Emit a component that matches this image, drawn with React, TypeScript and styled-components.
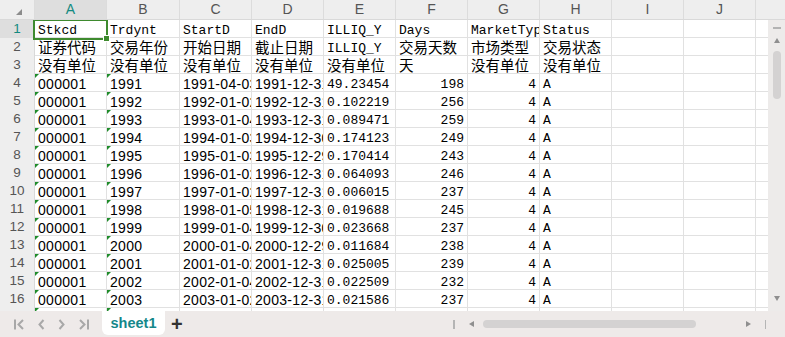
import styled, { createGlobalStyle } from "styled-components";

type Font = "mono" | "sans" | "cjk";

interface ICell {
    text: string;
    font: Font;
    right?: boolean;
    flag?: boolean;
}

const letters = ["A", "B", "C", "D", "E", "F", "G", "H", "I", "J"];

const titles = ["Stkcd", "Trdynt", "StartD", "EndD", "ILLIQ_Y", "Days", "MarketType", "Status"];
const labels = ["证券代码", "交易年份", "开始日期", "截止日期", "ILLIQ_Y", "交易天数", "市场类型", "交易状态"];
const units = ["没有单位", "没有单位", "没有单位", "没有单位", "没有单位", "天", "没有单位", "没有单位"];

// year, start, end, illiq, days
const years: [number, string, string, string, number][] = [
    [1991, "04-03", "12-31", "49.23454", 198],
    [1992, "01-02", "12-31", "0.102219", 256],
    [1993, "01-04", "12-31", "0.089471", 259],
    [1994, "01-03", "12-30", "0.174123", 249],
    [1995, "01-03", "12-29", "0.170414", 243],
    [1996, "01-02", "12-31", "0.064093", 246],
    [1997, "01-02", "12-31", "0.006015", 237],
    [1998, "01-05", "12-31", "0.019688", 245],
    [1999, "01-04", "12-30", "0.023668", 237],
    [2000, "01-04", "12-29", "0.011684", 238],
    [2001, "01-02", "12-31", "0.025005", 239],
    [2002, "01-04", "12-31", "0.022509", 232],
    [2003, "01-02", "12-31", "0.021586", 237],
    [2004, "01-02", "12-31", "0.019874", 242],
];

const isCjk = (s: string) => /[\u4e00-\u9fff]/.test(s);

const textRow = (items: string[]): ICell[] =>
    items.map(t => ({ text: t, font: isCjk(t) ? "cjk" : "mono" }));

const rows: ICell[][] = [
    textRow(titles),
    textRow(labels),
    textRow(units),
    ...years.map(([y, s, e, il, d]) => [
        { text: "000001", font: "sans" as Font, flag: true },
        { text: String(y), font: "sans" as Font, flag: true },
        { text: `${y}-${s}`, font: "sans" as Font },
        { text: `${y}-${e}`, font: "sans" as Font },
        { text: il, font: "mono" as Font },
        { text: String(d), font: "mono" as Font, right: true },
        { text: "4", font: "mono" as Font, right: true },
        { text: "A", font: "mono" as Font },
    ]),
];

function NavIcon({ dir, bar }: { dir: "left" | "right"; bar?: boolean }) {
    const left = dir === "left";
    return (
        <svg width={bar ? 11 : 7} height="11" viewBox={bar ? "0 0 11 11" : "0 0 7 11"}>
            {bar && <line x1={left ? 1 : 10} y1="0.5" x2={left ? 1 : 10} y2="10.5" stroke="#a8a8a8" strokeWidth="2" />}
            <polyline
                points={
                    bar
                        ? left ? "9,1 4.5,5.5 9,10" : "2,1 6.5,5.5 2,10"
                        : left ? "5.5,1 1.5,5.5 5.5,10" : "1.5,1 5.5,5.5 1.5,10"
                }
                fill="none"
                stroke="#a8a8a8"
                strokeWidth="2"
            />
        </svg>
    );
}

function App() {
    return (
        <>
            <GlobalStyle />
            <Page>
                <HeaderRow>
                    <Corner />
                    {letters.map(l => (
                        <ColHead key={l} $active={l === "A"}>{l}</ColHead>
                    ))}
                    <ColHead />
                </HeaderRow>
                <Main>
                    <Rows>
                        {rows.map((r, i) => (
                            <Row key={i}>
                                <RowHead $active={i === 0}>{i + 1}</RowHead>
                                {r.map((c, j) => (
                                    <Cell key={j} $font={c.font} $right={c.right} $flag={c.flag}>
                                        {c.text}
                                    </Cell>
                                ))}
                                <Cell $font="mono" />
                                <Cell $font="mono" />
                                <Cell $font="mono" $last />
                            </Row>
                        ))}
                        <Selection />
                    </Rows>
                    <VScroll>
                        <Dash />
                        <Tri $dir="up" />
                        <VThumb />
                        <Tri $dir="down" />
                    </VScroll>
                </Main>
                <BottomBar>
                    <Nav>
                        <NavIcon dir="left" bar />
                        <NavIcon dir="left" />
                        <NavIcon dir="right" />
                        <NavIcon dir="right" bar />
                    </Nav>
                    <SheetTab>sheet1</SheetTab>
                    <AddSheet>+</AddSheet>
                    <HScroll>
                        <Divider />
                        <Tri $dir="left" />
                        <HThumb />
                        <Tri $dir="right" />
                        <Divider />
                    </HScroll>
                </BottomBar>
            </Page>
        </>
    );
}

const GlobalStyle = createGlobalStyle`
    body {
        margin: 0;
        background: #ffffff;
        font-family: "Liberation Sans", Arial, sans-serif;
        overflow: hidden;
    }
`;

const Page = styled.div`
    width: 785px;
    height: 337px;
    display: flex;
    flex-direction: column;
    overflow: hidden;
`;

const gridCols = "35px 72px 73px repeat(8, 72px)";

const HeaderRow = styled.div`
    display: grid;
    grid-template-columns: ${gridCols} 1fr;
    height: 20px;
    flex-shrink: 0;
    background: #eeeeee;
    border-bottom: 1px solid #d9d9d9;
    box-sizing: border-box;
`;

const Corner = styled.div`
    position: relative;
    border-right: 1px solid #dcdcdc;

    &::after {
        content: "";
        position: absolute;
        left: 16px;
        top: 9px;
        border-bottom: 6px solid #8c8c8c;
        border-left: 6px solid transparent;
    }
`;

const ColHead = styled.div<{ $active?: boolean }>`
    border-right: 1px solid #dcdcdc;
    background: ${p => (p.$active ? "#dedede" : "transparent")};
    color: ${p => (p.$active ? "#128a80" : "#555555")};
    font-size: 14px;
    line-height: 19px;
    text-align: center;

    &:last-child {
        border-right: none;
    }
`;

const Main = styled.div`
    display: flex;
    height: 291px;
    flex-shrink: 0;
`;

const Rows = styled.div`
    position: relative;
    flex: 1;
    overflow: hidden;
`;

const Row = styled.div`
    display: grid;
    grid-template-columns: ${gridCols} 1fr;
    height: 18px;
`;

const RowHead = styled.div<{ $active?: boolean }>`
    box-sizing: border-box;
    background: ${p => (p.$active ? "#dedede" : "#eeeeee")};
    color: ${p => (p.$active ? "#128a80" : "#555555")};
    border-right: 1px solid #d9d9d9;
    border-bottom: 1px solid #dcdcdc;
    font-size: 13.5px;
    line-height: 18px;
    text-align: center;
`;

const fonts = {
    mono: `font-family: "Liberation Mono", "DejaVu Sans Mono", monospace; font-size: 13px; padding-top: 2px;`,
    sans: `font-family: "Liberation Sans", Arial, sans-serif; font-size: 14px; letter-spacing: 0.3px; padding-top: 2px;`,
    cjk: `font-family: "Noto Sans CJK SC", sans-serif; font-size: 14.5px; padding-top: 0;`,
};

const Cell = styled.div<{ $font: Font; $right?: boolean; $flag?: boolean; $last?: boolean }>`
    position: relative;
    box-sizing: border-box;
    height: 18px;
    padding-left: 3px;
    padding-right: 3px;
    border-right: ${p => (p.$last ? "none" : "1px solid #e1e1e1")};
    border-bottom: 1px solid #e1e1e1;
    overflow: hidden;
    white-space: nowrap;
    line-height: 17px;
    color: #000000;
    text-align: ${p => (p.$right ? "right" : "left")};
    ${p => fonts[p.$font]}

    &::before {
        content: "";
        display: ${p => (p.$flag ? "block" : "none")};
        position: absolute;
        left: 0;
        top: 0;
        border-top: 4px solid #1f8c2a;
        border-right: 4px solid transparent;
    }
`;

const Selection = styled.div`
    position: absolute;
    left: 33px;
    top: -1px;
    width: 75px;
    height: 21px;
    box-sizing: border-box;
    border: 2px solid #3e8a2e;
    pointer-events: none;

    &::after {
        content: "";
        position: absolute;
        right: -4px;
        bottom: -4px;
        width: 5px;
        height: 5px;
        background: #3e8a2e;
        border: 1px solid #ffffff;
    }
`;

const VScroll = styled.div`
    width: 17px;
    flex-shrink: 0;
    background: #edebea;
    display: flex;
    flex-direction: column;
    align-items: center;
    padding: 7px 0 10px;
    box-sizing: border-box;
`;

const Dash = styled.div`
    width: 8px;
    height: 1.5px;
    background: #b3b3b3;
`;

const triangles = {
    up: `border-bottom: 5px solid #8f8f8f; border-left: 3.5px solid transparent; border-right: 3.5px solid transparent; margin-top: 9px;`,
    down: `border-top: 5px solid #8f8f8f; border-left: 3.5px solid transparent; border-right: 3.5px solid transparent; margin-top: auto;`,
    left: `border-right: 5px solid #8f8f8f; border-top: 3.5px solid transparent; border-bottom: 3.5px solid transparent; margin-left: 14px;`,
    right: `border-left: 5px solid #8f8f8f; border-top: 3.5px solid transparent; border-bottom: 3.5px solid transparent; margin-left: 50px; margin-right: 14px;`,
};

const Tri = styled.div<{ $dir: "up" | "down" | "left" | "right" }>`
    width: 0;
    height: 0;
    ${p => triangles[p.$dir]}
`;

const VThumb = styled.div`
    width: 8px;
    height: 48px;
    margin-top: 8px;
    border-radius: 4px;
    background: #d4d2d2;
`;

const BottomBar = styled.div`
    flex: 1;
    display: flex;
    align-items: center;
    background: #eeeae9;
`;

const Nav = styled.div`
    display: flex;
    align-items: center;
    gap: 13px;
    padding-left: 14px;
    width: 88px;
`;

const SheetTab = styled.div`
    align-self: flex-start;
    width: 63px;
    height: 24px;
    background: #ffffff;
    border-radius: 0 0 6px 6px;
    font-weight: bold;
    font-size: 14.5px;
    line-height: 24px;
    text-align: center;
    color: #14878a;
`;

const AddSheet = styled.div`
    margin-left: 6px;
    font-size: 20px;
    font-weight: bold;
    color: #333333;
    line-height: 26px;
`;

const HScroll = styled.div`
    margin-left: auto;
    margin-right: 19px;
    display: flex;
    align-items: center;
`;

const Divider = styled.div`
    width: 1.5px;
    height: 9px;
    background: #b5b5b5;
`;

const HThumb = styled.div`
    width: 213px;
    height: 8px;
    margin-left: 9px;
    border-radius: 4px;
    background: #d4d2d2;
`;

export default App;
